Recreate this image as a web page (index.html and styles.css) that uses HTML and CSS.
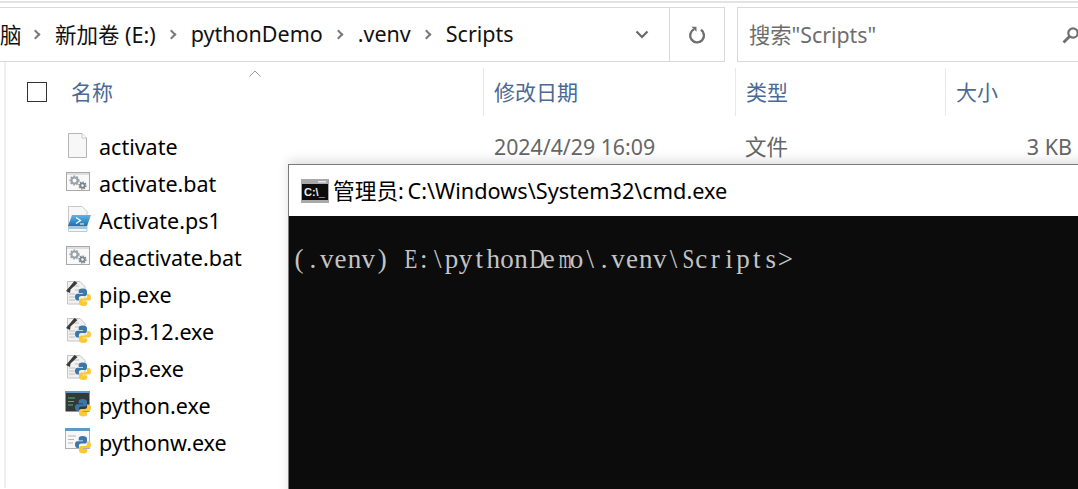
FILE: index.html
```html
<!DOCTYPE html>
<html lang="zh">
<head>
<meta charset="utf-8">
<title>Scripts</title>
<link rel="stylesheet" href="styles.css">
</head>
<body>
<svg width="0" height="0" class="defs">
  <defs>
    <linearGradient id="ps" x1="0" y1="0" x2="0" y2="1"><stop offset="0" stop-color="#5fb4e6"/><stop offset="1" stop-color="#1f6fb5"/></linearGradient>
    <g id="snake">
      <path d="M6.500 0C4 0 3.200 1 3.200 2.400V4H7v.7H1.800C.6 4.700 0 5.800 0 7.600s.8 3 2 3h1.400V8.600c0-1.200 1-2 2.100-2h3.200c1 0 1.700-.8 1.700-1.800V2.200C10.400.9 9 0 6.500 0z" fill="#3b77a8"/>
      <path d="M7.400 15.400c2.500 0 3.300-1 3.300-2.400v-1.600H6.900v-.7h5.200c1.200 0 1.800-1.100 1.800-2.900s-.8-3-2-3h-1.400v2c0 1.200-1 2-2.100 2H5.200c-1 0-1.700.8-1.700 1.800v2.600c0 1.300 1.400 2.200 3.900 2.200z" fill="#fcc934"/>
    </g>
    <g id="gearfile">
      <rect x="1.500" y="3.500" width="23" height="18" fill="#f9f9f9" stroke="#a9a9a9"/>
      <rect x="2" y="4" width="22" height="2" fill="#dedede"/>
      <circle cx="9.500" cy="11.500" r="3" fill="none" stroke="#9aa3aa" stroke-width="2"/>
      <circle cx="9.500" cy="11.500" r="4.300" fill="none" stroke="#9aa3aa" stroke-width="1.600" stroke-dasharray="1.800 1.300"/>
      <circle cx="17.500" cy="16.500" r="2.200" fill="none" stroke="#7d858c" stroke-width="1.800"/>
      <circle cx="17.500" cy="16.500" r="3.400" fill="none" stroke="#7d858c" stroke-width="1.400" stroke-dasharray="1.500 1.100"/>
    </g>
    <g id="pipfile">
      <path d="M2.500 1.500H15l5 5V24H2.500z" fill="#f1f1f1" stroke="#c4c4c4"/>
      <path d="M8 6h6M10 10h8M4 14h6M4 17h6M4 20h6" stroke="#c0c0c0"/>
      <path d="M1 11 9.500 1l3 2-7 6.500-.5 3.500z" fill="#3a3a3a"/>
      <use href="#snake" transform="translate(10 8.500) scale(1.150 1.130)"/>
    </g>
  </defs>
</svg>

<div class="explorer">
  <div class="topline"></div>
  <div class="toolbar">
    <div class="address">
      <div class="crumbs">
        <span class="crumb-cut">脑</span><span class="sep"></span>
        <span>新加卷 (E:)</span><span class="sep"></span>
        <span>pythonDemo</span><span class="sep"></span>
        <span>.venv</span><span class="sep"></span>
        <span>Scripts</span>
      </div>
      <div class="drop"><svg width="14" height="9" viewBox="0 0 14 9"><path d="M1.500 1.500 7 7l5.500-5.500" fill="none" stroke="#6a6a6a" stroke-width="2.200"/></svg></div>
      <div class="refresh"><svg width="18" height="18" viewBox="0 0 18 18"><path d="M6 3.300A6.900 6.900 0 1 0 13 3.800" fill="none" stroke="#6f6f6f" stroke-width="2.400"/><path d="M3.500 0.800h5v5z" fill="#6f6f6f"/></svg></div>
    </div>
    <div class="search">
      <span>搜索"Scripts"</span>
      <svg class="lens" width="18" height="18" viewBox="0 0 18 18"><circle cx="11" cy="7" r="4.700" fill="none" stroke="#6f6f6f" stroke-width="2.200"/><path d="M7.500 10.500 1.500 16.500" stroke="#6f6f6f" stroke-width="2.800"/></svg>
    </div>
  </div>

  <div class="listing">
    <div class="sort-caret"><svg width="12" height="7" viewBox="0 0 12 7"><path d="M.5 6.500 6 1l5.500 5.500" fill="none" stroke="#9a9a9a"/></svg></div>
    <div class="head">
      <div class="col col-name"><span class="check"></span><span class="label">名称</span></div>
      <div class="col col-date"><span class="label">修改日期</span></div>
      <div class="col col-type"><span class="label">类型</span></div>
      <div class="col col-size"><span class="label">大小</span></div>
    </div>
    <div class="rows">
      <div class="row">
        <svg class="ico" viewBox="0 0 26 26"><path d="M3.500 1.500H17l4.500 4.500V25.500H3.500z" fill="#f7f7f8" stroke="#b5b5b5"/><path d="M17 1.500V6h4.500" fill="#fff" stroke="#c4c4c4"/></svg>
        <span class="fname">activate</span>
        <span class="fdate">2024/4/29 16:09</span>
        <span class="ftype">文件</span>
        <span class="fsize">3 KB</span>
      </div>
      <div class="row">
        <svg class="ico" viewBox="0 0 26 26"><use href="#gearfile"/></svg>
        <span class="fname">activate.bat</span>
      </div>
      <div class="row">
        <svg class="ico" viewBox="0 0 26 26"><path d="M3.500 .5H17l5 5V25.500H3.500z" fill="#f7f7f7" stroke="#c8c8c8"/><path d="M7 9h19l-4 11H3z" fill="url(#ps)"/><path d="M3 20h19v3H3z" fill="#a8c6da"/><path d="M11 11.500l4.500 3-4.500 3M15 18h4" fill="none" stroke="#fff" stroke-width="1.200"/></svg>
        <span class="fname">Activate.ps1</span>
      </div>
      <div class="row">
        <svg class="ico" viewBox="0 0 26 26"><use href="#gearfile"/></svg>
        <span class="fname">deactivate.bat</span>
      </div>
      <div class="row">
        <svg class="ico" viewBox="0 0 26 26"><use href="#pipfile"/></svg>
        <span class="fname">pip.exe</span>
      </div>
      <div class="row">
        <svg class="ico" viewBox="0 0 26 26"><use href="#pipfile"/></svg>
        <span class="fname">pip3.12.exe</span>
      </div>
      <div class="row">
        <svg class="ico" viewBox="0 0 26 26"><use href="#pipfile"/></svg>
        <span class="fname">pip3.exe</span>
      </div>
      <div class="row">
        <svg class="ico" viewBox="0 0 26 26"><rect x=".5" y=".5" width="24" height="20" fill="#33383b"/><rect width="25" height="2" fill="#5d9ac9"/><path d="M3 7h7M3 10.500h6M3 14h5" stroke="#58b368"/><use href="#snake" transform="translate(10 8) scale(1.150 1.130)"/></svg>
        <span class="fname">python.exe</span>
      </div>
      <div class="row">
        <svg class="ico" viewBox="0 0 26 26"><rect x=".5" y=".5" width="24" height="20" fill="#f7f7f7" stroke="#b0b0b0"/><rect width="25" height="3" fill="#5d9ac9"/><path d="M3 8h8M3 11.500h6M3 15h5" stroke="#b5b5b5"/><use href="#snake" transform="translate(10 8) scale(1.150 1.130)"/></svg>
        <span class="fname">pythonw.exe</span>
      </div>
    </div>
  </div>
</div>

<div class="console">
  <div class="titlebar">
    <svg width="28" height="24" viewBox="0 0 28 24"><rect width="28" height="24" fill="#a9a9a9"/><rect x="1" y="5" width="26" height="16" fill="#0c0c0c"/><rect x="17" y="2" width="8" height="1.500" fill="#e8e8e8"/><text x="3" y="17" class="icotext">C:\_</text></svg>
    <span>管理员: C:\Windows\System32\cmd.exe</span>
  </div>
  <div class="screen"><span class="c">(</span><span class="c">.</span><span class="c">v</span><span class="c">e</span><span class="c">n</span><span class="c">v</span><span class="c">)</span><span class="c"> </span><span class="c narrow">E</span><span class="c">:</span><span class="c">\</span><span class="c">p</span><span class="c">y</span><span class="c">t</span><span class="c">h</span><span class="c">o</span><span class="c">n</span><span class="c narrow">D</span><span class="c">e</span><span class="c narrower">m</span><span class="c">o</span><span class="c">\</span><span class="c">.</span><span class="c">v</span><span class="c">e</span><span class="c">n</span><span class="c">v</span><span class="c">\</span><span class="c narrow">S</span><span class="c">c</span><span class="c">r</span><span class="c">i</span><span class="c">p</span><span class="c">t</span><span class="c">s</span><span class="c">&gt;</span></div>
</div>
</body>
</html>
```
FILE: styles.css
```css
html, body {
  margin: 0;
  padding: 0;
  width: 1078px;
  height: 489px;
  overflow: hidden;
  background: #fff;
}
body {
  position: relative;
  font-family: "Noto Sans", "Noto Sans CJK SC", sans-serif;
  font-size: 21.500px;
  color: #000;
}
.defs { position: absolute; }
.explorer { width: 1078px; }
.topline { height: 2px; margin-top: 1px; background: #e3e3e3; }
.toolbar {
  display: flex;
  gap: 12px;
  height: 55px;
  margin-top: 4px;
}
.address {
  width: 725px;
  display: flex;
  box-sizing: border-box;
  border: solid #d9d9d9;
  border-width: 1px 1px 1px 0;
}
.crumbs {
  flex: 1;
  display: flex;
  align-items: center;
  white-space: nowrap;
  overflow: hidden;
  font-size: 21.500px;
  color: #111;
  padding-bottom: 2px;
}
.crumb-cut { width: 20px; }
.sep {
  width: 7px;
  height: 7px;
  margin: 2px 16px 0 12px;
  box-sizing: border-box;
  border: solid #7a7a7a;
  border-width: 2px 2px 0 0;
  transform: rotate(45deg);
}
.drop {
  width: 55px;
  display: flex;
  align-items: center;
  justify-content: center;
}
.refresh {
  width: 54px;
  border-left: 1px solid #d9d9d9;
  display: flex;
  align-items: center;
  justify-content: center;
}
.search {
  flex: 1;
  box-sizing: border-box;
  border: solid #d9d9d9;
  border-width: 1px 0 1px 1px;
  display: flex;
  align-items: center;
  justify-content: space-between;
  padding-left: 11px;
  color: #6d6d6d;
  font-size: 21.300px;
  overflow: hidden;
}
.search span { margin-bottom: 3px; }
.lens { margin-right: -2px; }
.listing {
  position: relative;
  height: 426px;
  margin-left: 4px;
  border-left: 2px solid #f0f0f0;
}
.sort-caret {
  position: absolute;
  left: 243px;
  top: 7px;
  line-height: 0;
}
.head {
  display: flex;
  height: 48px;
  padding-top: 6px;
  color: #4a6a94;
  font-size: 21px;
}
.label { margin-bottom: 2px; }
.col {
  box-sizing: border-box;
  display: flex;
  align-items: center;
  height: 48px;
  padding-left: 10px;
  border-right: 1px solid #e8e8e8;
}
.col-name { width: 478px; padding-left: 21px; }
.col-date { width: 252px; }
.col-type { width: 210px; }
.col-size { flex: 1; border-right: 0; }
.check {
  width: 18px;
  height: 18px;
  border: 1px solid #333;
  margin-right: 24px;
}
.rows {
  margin-top: 12px;
  display: flex;
  flex-direction: column;
}
.row {
  height: 37px;
  display: flex;
  align-items: center;
  padding-left: 59px;
  white-space: nowrap;
  font-size: 21.500px;
  color: #000;
}
.ico { width: 26px; height: 26px; margin-bottom: 3px; flex: none; }
.fname { margin-left: 8px; width: 395px; flex: none; }
.fdate { width: 251px; color: #666; flex: none; font-size: 21.300px; }
.ftype { width: 165px; color: #666; flex: none; margin-bottom: 2px; }
.fsize { width: 162px; text-align: right; color: #666; flex: none; }
.console {
  position: absolute;
  left: 288px;
  top: 164px;
  width: 800px;
  height: 340px;
  border: 1px solid #7a7a7a;
  border-right: 0;
  background: #0c0c0c;
  box-shadow: 0 -4px 10px rgba(0, 0, 0, .12);
}
.titlebar {
  height: 51px;
  background: #fff;
  display: flex;
  align-items: center;
  gap: 4px;
  padding-left: 12px;
  font-size: 21.700px;
  word-spacing: -2px;
  color: #000;
  white-space: nowrap;
}
.titlebar span { margin-bottom: 3px; }
.icotext {
  font-family: "Liberation Sans", sans-serif;
  font-size: 11px;
  font-weight: 700;
  fill: #eee;
}
.screen {
  font-family: "Liberation Serif", serif;
  font-size: 27px;
  color: #c4c4c4;
  padding: 29px 0 0 3px;
  line-height: 28px;
  white-space: pre;
}
.c {
  display: inline-block;
  width: 13.890px;
  text-align: center;
}
.narrow { transform: scaleX(.78); }
.narrower { transform: scaleX(.62); }
```
